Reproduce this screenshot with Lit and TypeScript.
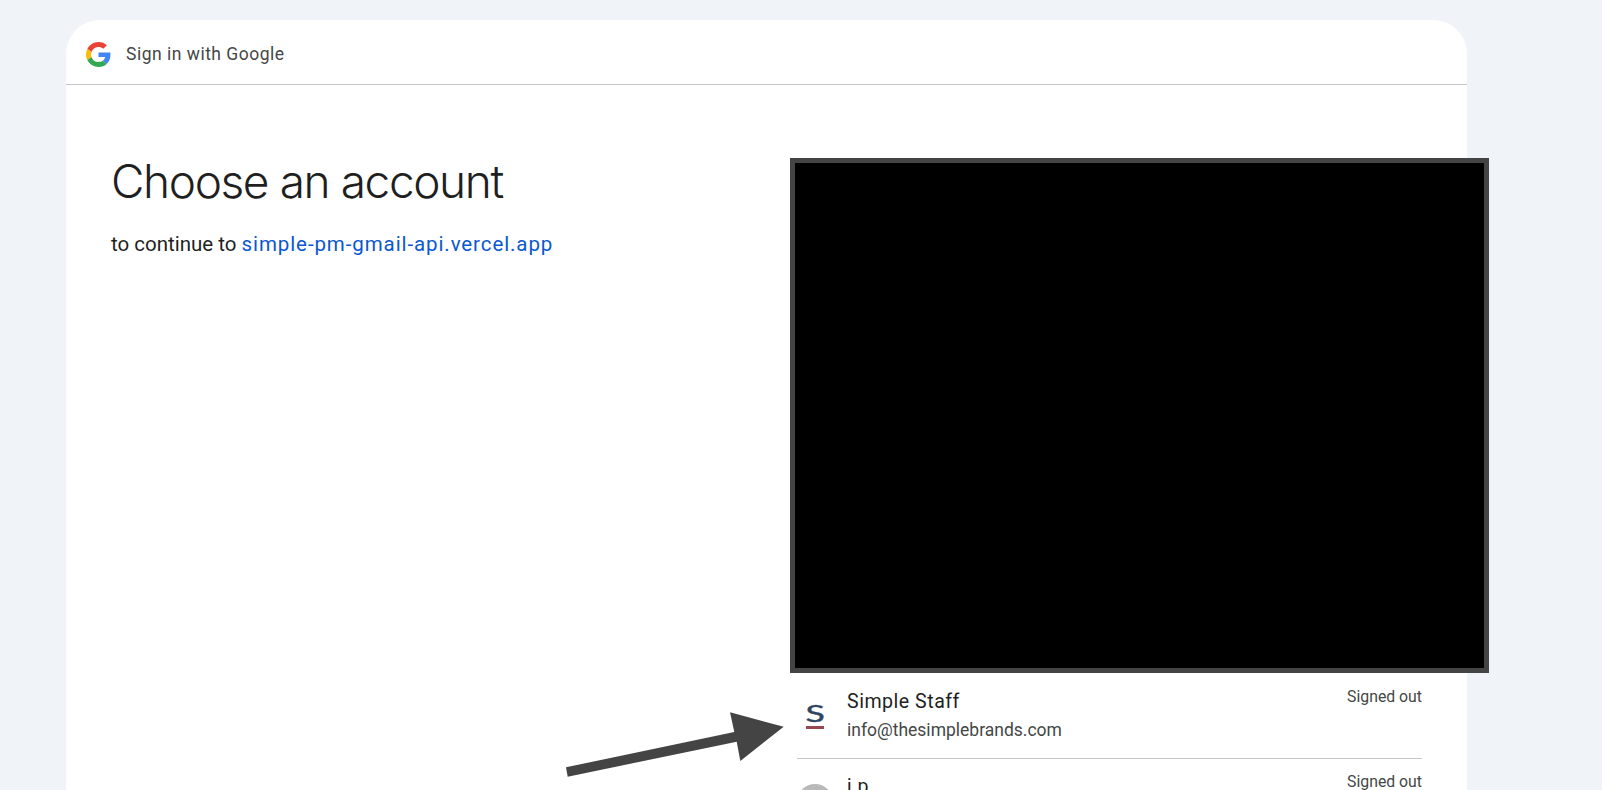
import { LitElement, css, html, svg } from 'lit';
import { customElement } from 'lit/decorators.js';

const googleG = svg`
  <path fill="#EA4335" d="M24 9.5c3.54 0 6.71 1.22 9.21 3.6l6.85-6.85C35.9 2.38 30.47 0 24 0 14.62 0 6.51 5.38 2.56 13.22l7.98 6.19C12.43 13.72 17.74 9.5 24 9.5z"/>
  <path fill="#4285F4" d="M46.98 24.55c0-1.57-.15-3.09-.38-4.55H24v9.02h12.94c-.58 2.96-2.26 5.48-4.78 7.18l7.73 6c4.51-4.18 7.09-10.36 7.09-17.65z"/>
  <path fill="#FBBC05" d="M10.53 28.59c-.48-1.45-.76-2.99-.76-4.59s.27-3.14.76-4.59l-7.98-6.19C.92 16.46 0 20.12 0 24c0 3.88.92 7.54 2.56 10.78l7.97-6.19z"/>
  <path fill="#34A853" d="M24 48c6.48 0 11.93-2.13 15.89-5.81l-7.73-6c-2.15 1.45-4.92 2.3-8.16 2.3-6.26 0-11.57-4.22-13.47-9.91l-7.98 6.19C6.51 42.62 14.62 48 24 48z"/>
`;

@customElement('app-root')
export class AppRoot extends LitElement {
  static styles = css`
    :host {
      display: block;
      position: relative;
      height: 100vh;
      overflow: hidden;
      box-sizing: border-box;
      padding: 20px 135px 0 66px;
      background: #f0f4f9;
      font-family: Roboto, "Liberation Sans", sans-serif;
      color: #1f1f1f;
    }

    .card {
      background: #fff;
      border-radius: 34px 34px 0 0;
      height: 900px;
    }

    .card-header {
      display: flex;
      align-items: center;
      gap: 15px;
      height: 65px;
      box-sizing: border-box;
      padding: 4px 0 0 20px;
      border-bottom: 1px solid #c4c7c5;
      font-size: 17.5px;
      letter-spacing: 0.5px;
      color: #444746;
    }

    .g-logo {
      width: 25px;
      height: 25px;
    }

    .content {
      display: grid;
      grid-template-columns: 731px 625px;
      padding-top: 67px;
    }

    .intro {
      padding-left: 45px;
    }

    h1 {
      margin: 0;
      font-family: Inter, sans-serif;
      font-size: 46px;
      line-height: 58px;
      font-weight: 300;
      letter-spacing: -1.4px;
      color: #1f1f1f;
    }

    .intro p {
      margin: 21px 0 0;
      font-size: 20.5px;
      line-height: 26px;
    }

    .intro a {
      color: #0b57d0;
      letter-spacing: 0.9px;
      text-decoration: none;
    }

    .accounts {
      padding-top: 522px;
    }

    .account {
      display: flex;
      height: 85px;
      box-sizing: border-box;
      border-bottom: 1px solid #c4c7c5;
    }

    .avatar {
      flex: none;
      width: 36px;
      height: 36px;
      margin: 25px 14px 0 0;
      border-radius: 50%;
    }

    .avatar.brand {
      display: flex;
      flex-direction: column;
      align-items: center;
      margin-top: 29px;
    }

    .avatar.brand span {
      font-family: Lato, sans-serif;
      font-size: 23px;
      line-height: 20px;
      color: #2f4560;
      -webkit-text-stroke: 0.4px #2f4560;
      transform: scaleX(1.55);
    }

    .avatar.brand i {
      display: block;
      width: 18px;
      height: 3px;
      margin-top: 3px;
      background: #9a4650;
    }

    .avatar.gray {
      background: #b9b9b9;
    }

    .who {
      flex: 1;
      padding-top: 15px;
    }

    .name {
      font-size: 19.6px;
      line-height: 26px;
      letter-spacing: 0.5px;
      color: #1f1f1f;
    }

    .email {
      margin-top: 2px;
      font-size: 17.5px;
      line-height: 26px;
      color: #444746;
    }

    .status {
      padding-top: 13px;
      font-size: 15.8px;
      line-height: 20px;
      color: #444746;
    }

    .redaction {
      position: absolute;
      left: 790px;
      top: 158px;
      width: 699px;
      height: 515px;
      box-sizing: border-box;
      background: #000;
      border: 5px solid #444;
    }

    .arrow {
      position: absolute;
      left: 560px;
      top: 705px;
      width: 230px;
      height: 80px;
    }
  `;

  render() {
    return html`
      <div class="card">
        <div class="card-header">
          <svg class="g-logo" viewBox="0 0 48 48">${googleG}</svg>
          <span>Sign in with Google</span>
        </div>
        <div class="content">
          <div class="intro">
            <h1>Choose an account</h1>
            <p>to continue to <a href="#">simple-pm-gmail-api.vercel.app</a></p>
          </div>
          <div class="accounts">
            <div class="account">
              <div class="avatar brand"><span>S</span><i></i></div>
              <div class="who">
                <div class="name">Simple Staff</div>
                <div class="email">info@thesimplebrands.com</div>
              </div>
              <div class="status">Signed out</div>
            </div>
            <div class="account">
              <div class="avatar gray"></div>
              <div class="who">
                <div class="name">j p</div>
                <div class="email"></div>
              </div>
              <div class="status">Signed out</div>
            </div>
          </div>
        </div>
      </div>
      <div class="redaction"></div>
      <svg class="arrow" viewBox="560 705 230 80">
        <polygon fill="#444" points="566,767.3 734.3,732 730,712.3 783.7,726.7 740.3,761 736.7,741.7 567.7,776.7"/>
      </svg>
    `;
  }
}
